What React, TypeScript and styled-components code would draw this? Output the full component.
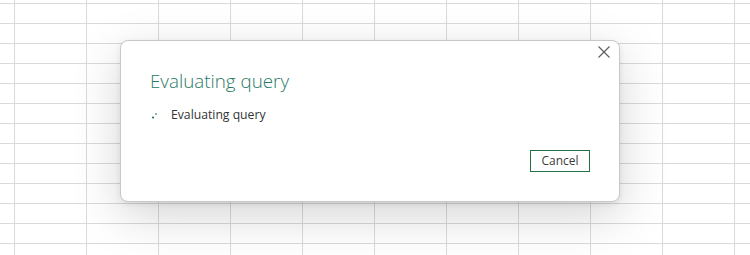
import React from "react";
import styled, { createGlobalStyle } from "styled-components";

const GlobalStyle = createGlobalStyle`
  html, body {
    margin: 0;
    padding: 0;
    background: #ffffff;
  }
  body {
    font-family: "Open Sans", "Noto Sans", sans-serif;
  }
`;

const Sheet = styled.div`
  width: 750px;
  height: 255px;
  overflow: hidden;
  box-sizing: border-box;
  padding: 40px 0 0 120px;
  background-color: #ffffff;
  background-image: linear-gradient(to right, #dadada 1px, transparent 1px),
    linear-gradient(to bottom, #dadada 1px, transparent 1px);
  background-size: 72px 20px;
  background-position: 14px 3px;
`;

const Dialog = styled.div`
  position: relative;
  width: 500px;
  height: 162px;
  box-sizing: border-box;
  background: #ffffff;
  border: 1px solid #c8c8c8;
  border-radius: 8px;
  box-shadow: 0 14px 48px rgba(0, 0, 0, 0.17), 0 2px 6px rgba(0, 0, 0, 0.08);
  padding: 26px 29px 0 29px;
  display: flex;
  flex-direction: column;
`;

const Title = styled.h1`
  margin: 0;
  font: normal 300 18.8px/28px "Open Sans", sans-serif;
  color: #2a7a66;
`;

const StatusRow = styled.div`
  margin-top: 11px;
  display: flex;
  align-items: center;
  gap: 11px;
`;

const Spinner = styled.svg`
  width: 9px;
  height: 9px;
  flex: none;
  margin-left: 1px;
`;

const StatusText = styled.span`
  font: normal 400 12.2px/18px "Open Sans", sans-serif;
  color: #333333;
`;

const Footer = styled.div`
  margin-top: auto;
  margin-bottom: 29px;
  display: flex;
  justify-content: flex-end;
`;

const Button = styled.button`
  width: 60px;
  height: 22px;
  box-sizing: border-box;
  background: #ffffff;
  border: 1px solid #217346;
  border-radius: 0;
  padding: 0;
  font: normal 400 12px/18px "Open Sans", sans-serif;
  color: #3b3b3b;
  cursor: pointer;
`;

const CloseButton = styled.button`
  position: absolute;
  top: 3px;
  right: 7px;
  width: 16px;
  height: 16px;
  padding: 0;
  border: none;
  background: transparent;
  display: flex;
  align-items: center;
  justify-content: center;
  cursor: pointer;
`;

function App() {
  return (
    <>
      <GlobalStyle />
      <Sheet>
        <Dialog>
          <CloseButton aria-label="Close">
            <svg width="12" height="12" viewBox="0 0 12 12">
              <path
                d="M0.5 0.5 L11.5 11.5 M11.5 0.5 L0.5 11.5"
                stroke="#605e5c"
                strokeWidth="1.2"
                fill="none"
              />
            </svg>
          </CloseButton>
          <Title>Evaluating query</Title>
          <StatusRow>
            <Spinner viewBox="0 0 9 9">
              <circle cx="2" cy="6.5" r="1.1" fill="#217346" />
              <circle cx="5" cy="3" r="0.9" fill="#217346" opacity="0.75" />
            </Spinner>
            <StatusText>Evaluating query</StatusText>
          </StatusRow>
          <Footer>
            <Button>Cancel</Button>
          </Footer>
        </Dialog>
      </Sheet>
    </>
  );
}

export default App;
